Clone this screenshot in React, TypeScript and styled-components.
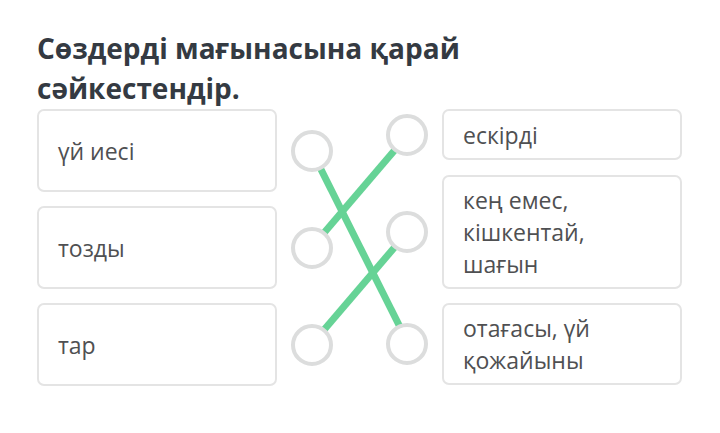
import styled, { createGlobalStyle } from 'styled-components'

const GlobalStyle = createGlobalStyle`
  html, body {
    margin: 0;
    padding: 0;
    background: #ffffff;
  }
  body {
    font-family: 'Open Sans', 'Noto Sans', sans-serif;
    overflow: hidden;
  }
`

const leftItems = ['үй иесі', 'тозды', 'тар']
const rightItems = [
  ['ескірді'],
  ['кең емес,', 'кішкентай,', 'шағын'],
  ['отағасы, үй', 'қожайыны'],
]

// pairs drawn between circle centres (board coordinates)
const links = [
  { x1: 274.5, y1: 41.5, x2: 371.5, y2: 235 },
  { x1: 371.5, y1: 25, x2: 274.5, y2: 138.5 },
  { x1: 371.5, y1: 122, x2: 274.5, y2: 235.5 },
]

export default function App() {
  return (
    <Page>
      <GlobalStyle />
      <Title>
        Сөздерді мағынасына қарай
        <br />
        сәйкестендір.
      </Title>
      <Board>
        <Lines width="646" height="280">
          {links.map((l, i) => (
            <line
              key={i}
              x1={l.x1}
              y1={l.y1}
              x2={l.x2}
              y2={l.y2}
              stroke="#66d396"
              strokeWidth="7"
            />
          ))}
        </Lines>
        <Column $gap={14}>
          {leftItems.map((text) => (
            <Item key={text} $gap={13.5}>
              <Card $minHeight={83}>{text}</Card>
              <Dot />
            </Item>
          ))}
        </Column>
        <Column $gap={14.5}>
          {rightItems.map((lines) => (
            <Item key={lines[0]} $gap={14}>
              <Dot />
              <Card $minHeight={51}>
                {lines.map((line) => (
                  <span key={line}>{line}</span>
                ))}
              </Card>
            </Item>
          ))}
        </Column>
      </Board>
    </Page>
  )
}

const Page = styled.div`
  padding: 28px 0 0 37px;
`
const Title = styled.h1`
  margin: 0 0 1px;
  font-size: 28px;
  line-height: 40px;
  font-weight: 700;
  color: #343a42;
`
const Board = styled.div`
  position: relative;
  display: flex;
  gap: 53.5px;
`
const Lines = styled.svg`
  position: absolute;
  left: 0;
  top: 0;
  z-index: 0;
  pointer-events: none;
`
const Column = styled.div<{ $gap: number }>`
  display: flex;
  flex-direction: column;
  gap: ${(p) => p.$gap}px;
  position: relative;
  z-index: 1;
`
const Item = styled.div<{ $gap: number }>`
  display: flex;
  align-items: center;
  gap: ${(p) => p.$gap}px;
`
const Card = styled.div<{ $minHeight: number }>`
  box-sizing: border-box;
  width: 240px;
  min-height: ${(p) => p.$minHeight}px;
  padding: 7px 19px;
  border: 2px solid #e4e4e4;
  border-radius: 7px;
  display: flex;
  flex-direction: column;
  justify-content: center;
  font-size: 23px;
  line-height: 32px;
  color: #4f5052;
  background: #fff;
`
const Dot = styled.div`
  box-sizing: border-box;
  flex: none;
  width: 42px;
  height: 42px;
  border-radius: 50%;
  border: 4px solid #dcdddd;
  background: #fff;
`
